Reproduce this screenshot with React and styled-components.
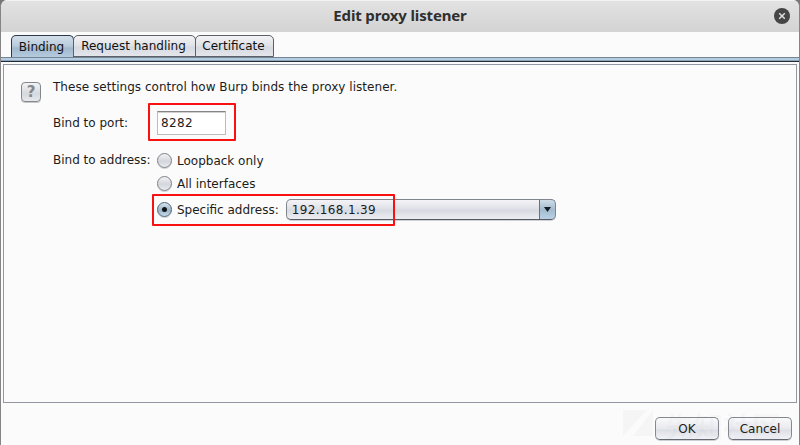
import React from 'react';
import styled, { createGlobalStyle } from 'styled-components';

const GlobalStyle = createGlobalStyle`
  * { box-sizing: border-box; }
  body { margin: 0; background: #77777b; overflow: hidden; }
`;

const Dialog = styled.main`
  position: relative;
  display: flex;
  flex-direction: column;
  width: 800px;
  height: 445px;
  border-left: 1px solid #858585;
  border-right: 1px solid #858585;
  border-radius: 7px 7px 0 0;
  overflow: hidden;
  background: #fbfbfb;
  color: #1c1c1c;
  font: 12px/16px 'DejaVu Sans', sans-serif;
  white-space: nowrap;
`;

const TitleBar = styled.header`
  display: grid;
  grid-template-columns: 1fr auto 1fr;
  align-items: center;
  height: 32px;
  flex: none;
  padding: 0 9px;
  border-top: 1px solid #f2f2f2;
  background: linear-gradient(#e2e2e2, #d3d3d3);
`;

const Title = styled.h1`
  grid-column: 2;
  margin: 0;
  padding-bottom: 3px;
  color: #2f2f2f;
  font: 700 15px/20px 'Noto Sans', sans-serif;
  letter-spacing: -0.15px;
`;

const CloseButton = styled.button`
  justify-self: end;
  width: 16px;
  height: 16px;
  margin-bottom: 1px;
  padding: 0;
  border: 0;
  background: none;
  svg { display: block; }
`;

const TabStrip = styled.nav`
  display: flex;
  align-items: flex-end;
  height: 25px;
  flex: none;
  padding-left: 10px;
`;

const Tab = styled.button`
  width: ${({ $width }) => $width}px;
  height: ${({ $active }) => ($active ? 23 : 22)}px;
  align-self: flex-start;
  margin-top: 3px;
  margin-right: -1px;
  padding: 0 2px 0 0;
  border: 1px solid ${({ $active }) => ($active ? '#29394a' : '#5c6068')};
  border-bottom-width: ${({ $active }) => ($active ? 0 : 1)}px;
  border-radius: 5px 5px 0 0;
  background: ${({ $active }) =>
    $active
      ? 'linear-gradient(#d3dfea, #b8cbdb 45%, #a2b9cd 55%, #b6cde1)'
      : 'linear-gradient(#f3f3f6, #dfe1e6 50%, #d6d9df 55%, #e4e6ec)'};
  color: #111;
  font: inherit;
`;

const TabBand = styled.div`
  height: 5px;
  flex: none;
  border-top: 1px solid #738494;
  border-bottom: 1px solid #1f2b38;
  background: linear-gradient(#b5cbe0, #b5cbe0 66%, #8fa5b9 67%);
`;

const Panel = styled.section`
  display: grid;
  grid-template-columns: 49px 1fr;
  height: 339px;
  flex: none;
  margin: 2px 2px 0;
  padding-top: 14px;
  border: 1px solid #9297a1;
`;

const HelpButton = styled.button`
  width: 20px;
  height: 20px;
  margin: 3px 0 0 17px;
  padding: 0;
  border: 1px solid #84878c;
  border-radius: 4px;
  background: linear-gradient(#f3f3f5, #d5d8dd 60%, #e7e9ed);
  box-shadow: 0 1px 0 #c5c7ca;
  color: #85878b;
  font: bold 15px/18px 'DejaVu Sans', sans-serif;
`;

const Form = styled.div`
  display: flex;
  flex-direction: column;
`;

const Description = styled.p`
  margin: 0 0 16px;
  letter-spacing: 0.035px;
`;

const Field = styled.div`
  display: grid;
  grid-template-columns: 104px 1fr;
  align-items: start;
  margin-bottom: ${({ $gap }) => $gap || 0}px;
`;

const Label = styled.label`
  padding-top: ${({ $top }) => $top || 0}px;
`;

const PortInput = styled.input`
  width: 69px;
  height: 24px;
  padding: 0 0 0 3px;
  border: 1px solid #bcbcbc;
  border-top: 1px solid #858585;
  border-radius: 0;
  background: #fff;
  box-shadow: inset 0 1px 0 #d0d0d0;
  color: #1c1c1c;
  font: inherit;
  letter-spacing: 0.35px;
`;

const Options = styled.div`
  display: flex;
  flex-direction: column;
`;

const Option = styled.div`
  display: flex;
  align-items: center;
  height: ${({ $height }) => $height}px;
`;

const Radio = styled.span`
  display: grid;
  place-items: center;
  width: 15px;
  height: 15px;
  margin-right: 5px;
  border: 1px solid ${({ $checked }) => ($checked ? '#4f6579' : '#7e8186')};
  border-radius: 50%;
  background: ${({ $checked }) =>
    $checked
      ? 'linear-gradient(#d8e4ed, #9db4c7 55%, #c5ddec)'
      : 'linear-gradient(#f3f3f6, #d3d6dc 55%, #e9ebef)'};
  box-shadow: 0 1px 0 #d0d3d7;
  &::after {
    content: '';
    width: 5px;
    height: 5px;
    border-radius: 50%;
    background: ${({ $checked }) => ($checked ? '#10151a' : 'transparent')};
  }
`;

const Select = styled.div`
  display: flex;
  justify-content: space-between;
  width: 270px;
  height: 21px;
  margin-left: 7px;
  border: 1px solid #81858d;
  border-bottom-color: #555a63;
  border-radius: 5px;
  background: linear-gradient(#f4f4f7, #e0e1e8 45%, #d8dae1 55%, #eceef3);
  box-shadow: 0 1px 0 #d0d2d5;
  overflow: hidden;
  line-height: 20px;
  letter-spacing: 0.35px;
  padding-left: 5px;
`;

const SelectArrow = styled.span`
  display: grid;
  place-items: center;
  width: 17px;
  margin: -1px -1px -1px 0;
  border: 1px solid #5e7488;
  border-radius: 0 5px 5px 0;
  background: linear-gradient(#cfdce8, #a4bbce 50%, #b9d1e4);
`;

const Actions = styled.footer`
  position: relative;
  display: flex;
  justify-content: flex-end;
  gap: 9px;
  padding: 14px 7px 0 0;
`;

const Button = styled.button`
  width: 64px;
  height: 23px;
  padding: 0;
  border: 1px solid #858890;
  border-bottom-color: #656972;
  border-radius: 5px;
  background: linear-gradient(#fafafb, #e7e9ee 50%, #dddfe6 58%, #f1f3f7);
  box-shadow: 0 1px 0 #cccfd3;
  color: #1c1c1c;
  font: inherit;
`;

const Highlight = styled.div`
  position: absolute;
  left: ${({ $x }) => $x}px;
  top: ${({ $y }) => $y}px;
  width: ${({ $w }) => $w}px;
  height: ${({ $h }) => $h}px;
  border: 2px solid #f91010;
  border-radius: 1px;
  pointer-events: none;
`;

const Watermark = styled.div`
  position: absolute;
  left: 622px;
  top: 407px;
  display: flex;
  align-items: center;
  gap: 12px;
  color: rgba(110, 110, 120, 0.045);
  font: bold 29px/36px 'Noto Sans CJK SC', sans-serif;
  pointer-events: none;
`;

export default function App() {
  return (
    <>
      <GlobalStyle />
      <Dialog>
        <TitleBar>
          <Title>Edit proxy listener</Title>
          <CloseButton aria-label="Close">
            <svg width="16" height="16" viewBox="0 0 16 16">
              <circle cx="8" cy="8" r="8" fill="#454545" />
              <path d="M5.2 5.2 10.8 10.8M10.8 5.2 5.2 10.8" stroke="#dedede" strokeWidth="1.5" />
            </svg>
          </CloseButton>
        </TitleBar>
        <TabStrip>
          <Tab $active $width={63}>Binding</Tab>
          <Tab $width={123}>Request handling</Tab>
          <Tab $width={79}>Certificate</Tab>
        </TabStrip>
        <TabBand />
        <Panel>
          <HelpButton>?</HelpButton>
          <Form>
            <Description>These settings control how Burp binds the proxy listener.</Description>
            <Field $gap={14}>
              <Label $top={4}>Bind to port:</Label>
              <PortInput defaultValue="8282" />
            </Field>
            <Field>
              <Label $top={3}>Bind to address:</Label>
              <Options>
                <Option $height={23}><Radio />Loopback only</Option>
                <Option $height={23}><Radio />All interfaces</Option>
                <Option $height={29}>
                  <Radio $checked />
                  Specific address:
                  <Select>
                    192.168.1.39
                    <SelectArrow>
                      <svg width="7" height="5" viewBox="0 0 7 5"><path d="M0 0H7L3.5 5Z" fill="#151b22" /></svg>
                    </SelectArrow>
                  </Select>
                </Option>
              </Options>
            </Field>
          </Form>
        </Panel>
        <Actions>
          <Button>OK</Button>
          <Button>Cancel</Button>
        </Actions>
        <Highlight $x={147} $y={103} $w={88} $h={38} />
        <Highlight $x={151} $y={194} $w={243} $h={32} />
        <Watermark>
          <svg width="30" height="30" viewBox="0 0 30 30" fill="currentColor"><path d="M0 0H24L0 26ZM30 0V26H10Z" /></svg>
          先知社区
        </Watermark>
      </Dialog>
    </>
  );
}
